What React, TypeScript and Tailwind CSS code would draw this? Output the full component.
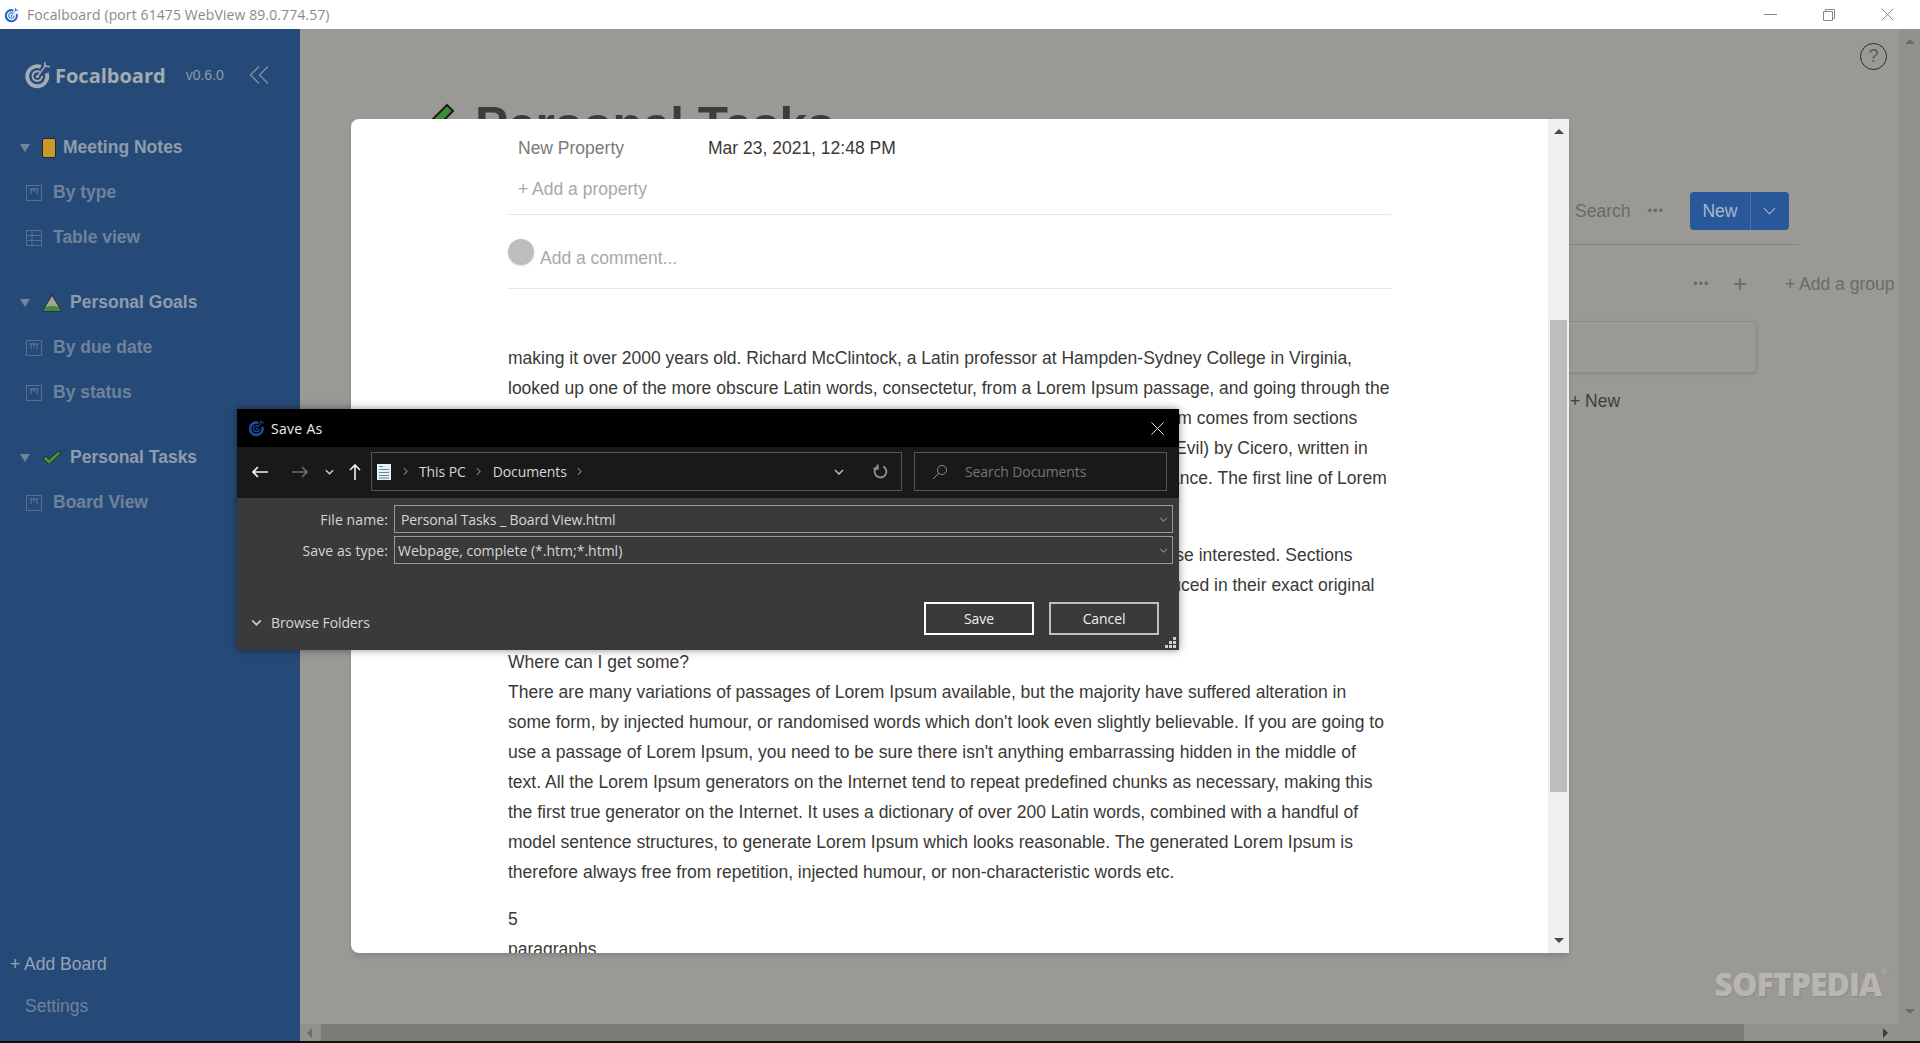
function Logo({ className }: { className: string }) {
  return (
    <svg viewBox="0 0 28 30" fill="none" stroke="currentColor" className={className}>
      <path d="M17.5 6.6A10.4 10.4 0 1 0 23.6 13" strokeWidth="4" />
      <path d="M16.4 11.8A5 5 0 1 0 18.8 16" strokeWidth="2" />
      <circle cx="14" cy="16.500" r="1.600" fill="currentColor" stroke="none" />
      <path d="M14 16.500 23 4.500" strokeWidth="1.500" />
      <path d="M21.500 6.500 21.800 1.500M22.500 6 27 6.500" strokeWidth="1.500" />
    </svg>
  );
}

function BoardIcon() {
  return (
    <svg viewBox="0 0 16 16" fill="none" stroke="currentColor" className="h-4 w-4 shrink-0 text-[#566f93]">
      <rect x="0.500" y="0.500" width="15" height="15" />
      <path d="M3.500 4h9M5 4v5M8 4v3M11 4v5" strokeWidth="1.300" />
    </svg>
  );
}

function TableIcon() {
  return (
    <svg viewBox="0 0 16 16" fill="none" stroke="currentColor" className="h-4 w-4 shrink-0 text-[#566f93]">
      <rect x="0.500" y="0.500" width="15" height="15" />
      <path d="M0.500 5.500h15M0.500 10.500h15M6 0.500v15" />
    </svg>
  );
}

function NotesEmoji() {
  return <span className="h-[20px] w-[14px] rounded-[2px] border border-[#1d2a3a] bg-[#c89a26]" />;
}

function MountainEmoji() {
  return (
    <svg viewBox="0 0 20 18" className="h-[18px] w-[20px]">
      <path d="M10 1 19.500 17H0.500Z" fill="#a7a394" stroke="#1b2a22" />
      <path d="M3 13.500c4-2 10-2 14 0l2 3.500H1Z" fill="#3f8a3c" />
    </svg>
  );
}

function CheckEmoji() {
  return (
    <svg viewBox="0 0 20 16" className="h-[16px] w-[20px]">
      <path d="M1 8.500 4 6l3 3.500L16.500 1 19 3 7 14.500Z" fill="#3c9a3a" stroke="#16291d" />
    </svg>
  );
}

function GroupRow({ emoji, label, labelGap }: { emoji: React.ReactNode; label: string; labelGap: string }) {
  return (
    <div className="flex h-[45px] items-center pl-5 font-bold text-[#8f9cae]">
      <span className="mr-[12px] h-0 w-0 border-x-[5px] border-t-[8px] border-x-transparent border-t-[#71849e]" />
      <span className={`flex justify-start ${labelGap}`}>{emoji}</span>
      <span>{label}</span>
    </div>
  );
}

function ViewRow({ icon, label }: { icon: React.ReactNode; label: string }) {
  return (
    <div className="flex h-[45px] items-center gap-[11px] pl-[26px] font-bold text-[#6f829c]">
      {icon}
      <span>{label}</span>
    </div>
  );
}

function Sidebar() {
  return (
    <aside className="flex w-[300px] shrink-0 flex-col bg-[#264a78] text-[17.5px] leading-none">
      <div className="flex h-[92px] items-center pl-[24px]">
        <Logo className="h-[30px] w-[27px] text-[#a5abb2]" />
        <span className="ml-[4px] pt-[2px] font-['Open_Sans',sans-serif] text-[20px] font-bold text-[#a5abb2]">Focalboard</span>
        <span className="ml-[20px] text-[14px] text-[#8d99ab]">v0.6.0</span>
        <svg viewBox="0 0 20 18" fill="none" stroke="#7f8ea5" strokeWidth="1.300" className="ml-[25px] h-[18px] w-[20px]">
          <path d="M10 0.500 1.500 9l8.500 8.500M19 0.500 10.500 9l8.500 8.500" />
        </svg>
      </div>
      <div className="pt-[4px]">
        <GroupRow emoji={<NotesEmoji />} labelGap="w-[21px]" label="Meeting Notes" />
        <ViewRow icon={<BoardIcon />} label="By type" />
        <ViewRow icon={<TableIcon />} label="Table view" />
      </div>
      <div className="pt-5">
        <GroupRow emoji={<MountainEmoji />} labelGap="w-[28px]" label="Personal Goals" />
        <ViewRow icon={<BoardIcon />} label="By due date" />
        <ViewRow icon={<BoardIcon />} label="By status" />
      </div>
      <div className="pt-5">
        <GroupRow emoji={<CheckEmoji />} labelGap="w-[28px]" label="Personal Tasks" />
        <ViewRow icon={<BoardIcon />} label="Board View" />
      </div>
      <div className="mt-auto pb-[26px]">
        <div className="pb-[24px] pl-[10px] text-[#97a3b3]">+ Add Board</div>
        <div className="pl-[25px] text-[#6f829c]">Settings</div>
      </div>
    </aside>
  );
}

function BackgroundBoard() {
  return (
    <div className="relative flex flex-1 flex-col text-[17.5px]">
      <div className="flex justify-end pr-[12px] pt-[14px]">
        <span className="flex h-[27px] w-[27px] items-center justify-center rounded-full border border-[#2e2d2b] text-[18px] text-[#5c5b58]">?</span>
      </div>
      <div className="flex h-[122px] items-start gap-[20px] pl-[125px] pt-[30px] text-[49.5px] font-bold leading-none text-[#3d3c39]">
        <svg viewBox="0 0 30 30" className="mt-[3px] h-[30px] w-[30px] shrink-0">
          <path d="M8 28 2 22 22 2l6 6Z" fill="#3c8d37" stroke="#1b1b18" strokeWidth="2" />
        </svg>
        <span>Personal Tasks</span>
      </div>
      <div className="ml-[300px] mr-[100px] flex h-[53px] items-start border-b border-[#858480] pl-[975px]">
        <div className="flex h-[38px] w-[110px] items-center gap-[17px] whitespace-nowrap text-[#6b6a67]">
          <span>Search</span>
          <span className="text-[13px] tracking-[1px]">•••</span>
        </div>
        <div className="ml-[5px] flex h-[38px] w-[99px] shrink-0 items-center rounded bg-[#28589a] text-[#a9b8cc]">
          <span className="flex h-full w-[61px] items-center justify-center border-r border-[#4a70a5]">New</span>
          <svg viewBox="0 0 14 8" fill="none" stroke="#a9b8cc" strokeWidth="1.200" className="ml-[12px] h-[8px] w-[13px]">
            <path d="M1 1l6 6 6-6" />
          </svg>
        </div>
      </div>
      <div className="flex h-[76px] items-center pl-[1393px] pt-[2px] text-[#6b6a67]">
        <span className="w-[40px] text-[13px] tracking-[1px]">•••</span>
        <span className="w-[52px] text-[24px] font-light leading-none">+</span>
        <span className="whitespace-nowrap">+ Add a group</span>
      </div>
      <div className="ml-[1200px] h-[52px] w-[257px] rounded border border-[#8c8b87] shadow-sm" />
      <div className="pl-[1270px] pt-[15px] text-[#3f3e3b]">+ New</div>
      <div className="absolute bottom-[24px] right-[12px] flex items-start font-['Open_Sans',sans-serif] text-[32px] font-extrabold leading-none tracking-[-1px] text-[#b7b6b2] [text-shadow:1px_1px_1px_#8b8a86]">
        SOFTPEDIA
        <span className="text-[8px] font-normal">®</span>
      </div>
    </div>
  );
}

function CardDialog() {
  return (
    <div className="absolute left-[351px] top-[119px] flex h-[834px] w-[1218px] overflow-hidden rounded-l-lg bg-white text-[17.5px] text-[#3a3936] shadow-md">
      <div className="min-w-0 flex-1 pl-[157px] pr-[157px] pt-[18px]">
        <div className="flex h-[22px] items-center">
          <span className="w-[200px] pl-[10px] text-[#7b7a77]">New Property</span>
          <span>Mar 23, 2021, 12:48 PM</span>
        </div>
        <div className="mt-[19px] border-b border-[#e6e6e5] pb-[14px] pl-[10px] leading-[22px] text-[#a9a8a6]">+ Add a property</div>
        <div className="flex h-[74px] items-start gap-[6px] border-b border-[#e6e6e5] pt-[24px]">
          <span className="h-[26px] w-[26px] rounded-full bg-[#bdbdbd] shadow" />
          <span className="pt-[6px] text-[#a9a8a6]">Add a comment...</span>
        </div>
        <div className="flex flex-col gap-[17px] pt-[54px] leading-[30px]">
          <p>
            making it over 2000 years old. Richard McClintock, a Latin professor at Hampden-Sydney College in Virginia, looked up one of the more obscure Latin words, consectetur, from a Lorem Ipsum passage, and going through the cites of the word in classical literature, discovered the undoubtable source. Lorem Ipsum comes from sections 1.10.32 and 1.10.33 of "de Finibus Bonorum et Malorum" (The Extremes of Good and Evil) by Cicero, written in 45 BC. This book is a treatise on the theory of ethics, very popular during the Renaissance. The first line of Lorem Ipsum, "Lorem ipsum dolor sit amet..", comes from a line in section 1.10.32.
          </p>
          <p>
            The standard chunk of Lorem Ipsum used since the 1500s is reproduced below for those interested. Sections 1.10.32 and 1.10.33 from "de Finibus Bonorum et Malorum" by Cicero are also reproduced in their exact original form, accompanied by English versions from the 1914 translation by H. Rackham.
          </p>
          <div>
            <p>Where can I get some?</p>
            <p>
              There are many variations of passages of Lorem Ipsum available, but the majority have suffered alteration in some form, by injected humour, or randomised words which don't look even slightly believable. If you are going to use a passage of Lorem Ipsum, you need to be sure there isn't anything embarrassing hidden in the middle of text. All the Lorem Ipsum generators on the Internet tend to repeat predefined chunks as necessary, making this the first true generator on the Internet. It uses a dictionary of over 200 Latin words, combined with a handful of model sentence structures, to generate Lorem Ipsum which looks reasonable. The generated Lorem Ipsum is therefore always free from repetition, injected humour, or non-characteristic words etc.
            </p>
          </div>
          <div>
            <p>5</p>
            <p>paragraphs</p>
          </div>
        </div>
      </div>
      <div className="flex w-[21px] shrink-0 flex-col items-center bg-[#f0f0f0] py-[10px]">
        <span className="h-0 w-0 border-x-[5px] border-b-[5px] border-x-transparent border-b-[#4a4a4a]" />
        <span className="mt-[186px] h-[472px] w-[17px] bg-[#bdbdbd]" />
        <span className="mt-auto h-0 w-0 border-x-[5px] border-t-[5px] border-x-transparent border-t-[#4a4a4a]" />
      </div>
    </div>
  );
}

function Chevron({ className }: { className: string }) {
  return (
    <svg viewBox="0 0 10 6" fill="none" stroke="currentColor" className={className}>
      <path d="M1 1l4 4 4-4" />
    </svg>
  );
}

function Crumb() {
  return (
    <svg viewBox="0 0 6 10" fill="none" stroke="#7a7a7a" strokeWidth="1.300" className="h-[9px] w-[5px]">
      <path d="M1 1l4 4-4 4" />
    </svg>
  );
}

function SaveAsDialog() {
  return (
    <div className="absolute left-[237px] top-[409px] flex h-[241px] w-[942px] flex-col bg-[#3a3a3a] font-['Open_Sans',sans-serif] text-[14px] tracking-[-0.1px] text-[#d6d6d6] shadow-[0_0_8px_rgba(0,0,0,0.45)]">
      <div className="flex h-[38px] shrink-0 items-center bg-black pl-[11px] pr-[15px] text-[#eeeeee]">
        <Logo className="h-[18px] w-[17px] text-[#1c4fa8]" />
        <span className="ml-[6px] tracking-[0.3px]">Save As</span>
        <svg viewBox="0 0 14 14" stroke="#f0f0f0" strokeWidth="1" className="ml-auto h-[13px] w-[13px]">
          <path d="M0.500 0.500l13 13M13.500 0.500l-13 13" />
        </svg>
      </div>
      <div className="flex h-[51px] shrink-0 items-start bg-[#191919] pl-[15px] pt-[5px]">
        <div className="flex h-[39px] w-[119px] shrink-0 items-center">
          <svg viewBox="0 0 16 12" fill="none" stroke="#f2f2f2" strokeWidth="1.600" className="h-[12px] w-[16px]">
            <path d="M16 6H1.500M6 1 1 6l5 5" />
          </svg>
          <svg viewBox="0 0 16 12" fill="none" stroke="#6f6f6f" strokeWidth="1.600" className="ml-[24px] h-[12px] w-[16px]">
            <path d="M0 6h14.500M10 1l5 5-5 5" />
          </svg>
          <Chevron className="ml-[17px] h-[6px] w-[9px] stroke-[1.6] text-[#cfcfcf]" />
          <svg viewBox="0 0 12 16" fill="none" stroke="#f2f2f2" strokeWidth="1.600" className="ml-[15px] h-[16px] w-[12px]">
            <path d="M6 16V1.500M1 6l5-5 5 5" />
          </svg>
        </div>
        <div className="flex h-[39px] w-[531px] shrink-0 items-center border border-[#555555] pl-[5px] pr-[13px]">
          <svg viewBox="0 0 14 16" className="h-[16px] w-[14px] shrink-0">
            <rect width="14" height="16" fill="#e8eef2" />
            <path d="M2 2.500h4M2 5.500h10M2 8.500h10M2 11.500h10M2 14h10" stroke="#5a8fb0" />
          </svg>
          <span className="ml-[12px]"><Crumb /></span>
          <span className="ml-[11px]">This PC</span>
          <span className="ml-[10px]"><Crumb /></span>
          <span className="ml-[12px]">Documents</span>
          <span className="ml-[10px]"><Crumb /></span>
          <Chevron className="ml-auto h-[6px] w-[10px] stroke-[1.6] text-[#b5b5b5]" />
          <svg viewBox="0 0 16 16" fill="none" stroke="#8f8f8f" strokeWidth="2" className="ml-[29px] h-[15px] w-[15px]">
            <path d="M5 2.500a6.300 6.300 0 1 0 6 0M5 0.500v4.500H0.500" />
          </svg>
        </div>
        <div className="ml-[12px] flex h-[39px] w-[253px] shrink-0 items-center border border-[#555555] pl-[17px] text-[#757575]">
          <svg viewBox="0 0 16 16" fill="none" stroke="#8a8a8a" className="h-[16px] w-[16px] shrink-0">
            <circle cx="10" cy="6" r="4.500" />
            <path d="M6.800 9.200 1 15" />
          </svg>
          <span className="ml-[17px]">Search Documents</span>
        </div>
      </div>
      <div className="flex flex-1 flex-col pt-[7px]">
        <div className="flex items-center">
          <span className="w-[151px] text-right tracking-[0.1px]">File name:</span>
          <div className="ml-[6px] flex h-[28px] w-[779px] items-center border border-[#999999] pl-[6px] pr-[4px]">
            <span>Personal Tasks _ Board View.html</span>
            <Chevron className="ml-auto h-[5px] w-[9px] text-[#c5c5c5]" />
          </div>
        </div>
        <div className="mt-[3px] flex items-center">
          <span className="w-[151px] text-right tracking-[0.1px]">Save as type:</span>
          <div className="ml-[6px] flex h-[28px] w-[779px] items-center border border-[#999999] pl-[3px] pr-[4px]">
            <span className="tracking-[0px]">Webpage, complete (*.htm;*.html)</span>
            <Chevron className="ml-auto h-[5px] w-[9px] text-[#c5c5c5]" />
          </div>
        </div>
        <div className="mt-[38px] flex items-start">
          <div className="flex items-center pl-[14px] pt-[10px]">
            <Chevron className="h-[7px] w-[11px] stroke-[1.6] text-[#c8c8c8]" />
            <span className="ml-[9px]">Browse Folders</span>
          </div>
          <div className="ml-auto mr-[20px] flex gap-[15px] text-[#eeeeee]">
            <span className="flex h-[33px] w-[110px] items-center justify-center border-2 border-white">Save</span>
            <span className="flex h-[33px] w-[110px] items-center justify-center border-2 border-[#bfbfbf]">Cancel</span>
          </div>
        </div>
      </div>
      <svg viewBox="0 0 11 11" fill="#cfcfcf" className="absolute bottom-[2px] right-[3px] h-[11px] w-[11px]">
        <path d="M8 0h3v3H8ZM4 4h3v3H4ZM8 4h3v3H8ZM0 8h3v3H0ZM4 8h3v3H4ZM8 8h3v3H8Z" />
      </svg>
    </div>
  );
}

export default function App() {
  return (
    <div className="relative flex h-[1043px] w-[1920px] flex-col overflow-hidden bg-[#111111] font-['Liberation_Sans',sans-serif]">
      <header className="flex h-[29px] shrink-0 items-center bg-white pl-[4px] font-['Open_Sans',sans-serif] text-[14px] text-[#8a8a8a]">
        <Logo className="h-[16px] w-[15px] text-[#1f66c4]" />
        <span className="ml-[8px] tracking-[0.1px]">Focalboard (port 61475 WebView 89.0.774.57)</span>
        <div className="ml-auto flex items-center gap-[46px] pr-[26px]">
          <span className="h-px w-[13px] bg-[#8a8a8a]" />
          <svg viewBox="0 0 12 12" fill="none" stroke="#8a8a8a" className="h-[12px] w-[12px]">
            <path d="M0.500 2.500h9v9h-9ZM2.500 2.500v-2h9v9h-2" />
          </svg>
          <svg viewBox="0 0 13 13" stroke="#8a8a8a" className="h-[13px] w-[13px]">
            <path d="M0.500 0.500l12 12M12.500 0.500l-12 12" />
          </svg>
        </div>
      </header>
      <div className="flex min-h-0 flex-1 pb-[2px]">
        <Sidebar />
        <main className="flex min-w-0 flex-1 flex-col bg-[#9a9995]">
          <div className="flex min-h-0 flex-1">
            <BackgroundBoard />
            <div className="flex w-[21px] shrink-0 flex-col items-center justify-between bg-[#92918d] py-[10px]">
              <span className="h-0 w-0 border-x-[5px] border-b-[5px] border-x-transparent border-b-[#6c6b68]" />
              <span className="h-0 w-0 border-x-[5px] border-t-[5px] border-x-transparent border-t-[#6c6b68]" />
            </div>
          </div>
          <div className="flex h-[17px] shrink-0 items-center bg-[#92918d] pl-[7px]">
            <span className="h-0 w-0 border-y-[5px] border-r-[5px] border-y-transparent border-r-[#6c6b68]" />
            <span className="ml-[9px] h-full w-[1423px] bg-[#7c7b77]" />
            <span className="ml-[139px] h-0 w-0 border-y-[5px] border-l-[5px] border-y-transparent border-l-[#3f3e3c]" />
          </div>
        </main>
      </div>
      <CardDialog />
      <SaveAsDialog />
    </div>
  );
}
